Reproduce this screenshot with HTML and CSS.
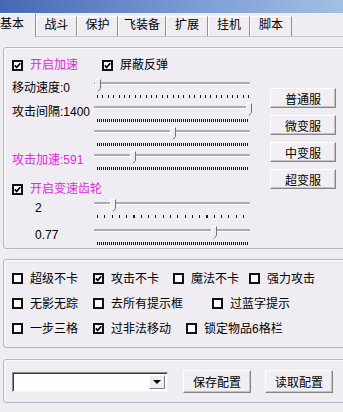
FILE: index.html
```html
<!DOCTYPE html>
<html lang="zh">
<head>
    <meta charset="UTF-8">
    <meta name="viewport" content="width=device-width, initial-scale=1.0">
    <link rel="stylesheet" href="styles.css">
</head>
<body>

	<div class="titlebar"></div>

	<!-- 탭 -->
	<ul class="tabs">
		<li class="tab on">基本</li>
		<li class="tab w41">战斗</li>
		<li class="tab w41">保护</li>
		<li class="tab w48">飞装备</li>
		<li class="tab w42">扩展</li>
		<li class="tab w43">挂机</li>
		<li class="tab w42">脚本</li>
	</ul>

	<!-- 가속 -->
	<div class="group group-speed">
		<div class="speed-left">
			<div class="check-row first">
				<label class="chk w90 pink"><span class="box"><svg viewBox="0 0 7 7"><path d="M0.8 3.4 L2.7 5.4 L6.3 1.2"/></svg></span>开启加速</label>
				<label class="chk"><span class="box"><svg viewBox="0 0 7 7"><path d="M0.8 3.4 L2.7 5.4 L6.3 1.2"/></svg></span>屏蔽反弹</label>
			</div>
			<div class="slide-row">
				<span class="slide-label">移动速度:0</span>
				<div class="slider sparse"><div class="track"></div><div class="ticks"></div><span class="thumb" style="left:1px"><svg viewBox="0 0 6 13"><polygon points="0.5,0.5 5.5,0.5 5.5,9.5 3,12.5 0.5,9.5" class="face"/><polyline points="0.5,9.5 0.5,0.5 5.5,0.5" class="hi"/><polyline points="5.5,0.5 5.5,9.5 3,12.5" class="lo"/></svg></span></div>
			</div>
			<div class="slide-row">
				<span class="slide-label">攻击间隔:1400</span>
				<div class="slider dense"><div class="track"></div><div class="ticks"></div><span class="thumb" style="left:152px"><svg viewBox="0 0 6 13"><polygon points="0.5,0.5 5.5,0.5 5.5,9.5 3,12.5 0.5,9.5" class="face"/><polyline points="0.5,9.5 0.5,0.5 5.5,0.5" class="hi"/><polyline points="5.5,0.5 5.5,9.5 3,12.5" class="lo"/></svg></span></div>
			</div>
			<div class="slide-row">
				<span class="slide-label"></span>
				<div class="slider dense"><div class="track"></div><div class="ticks"></div><span class="thumb" style="left:76px"><svg viewBox="0 0 6 13"><polygon points="0.5,0.5 5.5,0.5 5.5,9.5 3,12.5 0.5,9.5" class="face"/><polyline points="0.5,9.5 0.5,0.5 5.5,0.5" class="hi"/><polyline points="5.5,0.5 5.5,9.5 3,12.5" class="lo"/></svg></span></div>
			</div>
			<div class="slide-row">
				<span class="slide-label pink">攻击加速:591</span>
				<div class="slider dense"><div class="track"></div><div class="ticks"></div><span class="thumb" style="left:36px"><svg viewBox="0 0 6 13"><polygon points="0.5,0.5 5.5,0.5 5.5,9.5 3,12.5 0.5,9.5" class="face"/><polyline points="0.5,9.5 0.5,0.5 5.5,0.5" class="hi"/><polyline points="5.5,0.5 5.5,9.5 3,12.5" class="lo"/></svg></span></div>
			</div>

			<div class="check-row gear">
				<label class="chk pink"><span class="box"><svg viewBox="0 0 7 7"><path d="M0.8 3.4 L2.7 5.4 L6.3 1.2"/></svg></span>开启变速齿轮</label>
			</div>
			<div class="slide-row gear-row">
				<span class="slide-label indent">2</span>
				<div class="slider sparse wide"><div class="track"></div><div class="ticks"></div><span class="thumb" style="left:16px"><svg viewBox="0 0 6 13"><polygon points="0.5,0.5 5.5,0.5 5.5,9.5 3,12.5 0.5,9.5" class="face"/><polyline points="0.5,9.5 0.5,0.5 5.5,0.5" class="hi"/><polyline points="5.5,0.5 5.5,9.5 3,12.5" class="lo"/></svg></span></div>
			</div>
			<div class="slide-row gear-row last">
				<span class="slide-label indent">0.77</span>
				<div class="slider dense"><div class="track"></div><div class="ticks"></div><span class="thumb" style="left:117px"><svg viewBox="0 0 6 13"><polygon points="0.5,0.5 5.5,0.5 5.5,9.5 3,12.5 0.5,9.5" class="face"/><polyline points="0.5,9.5 0.5,0.5 5.5,0.5" class="hi"/><polyline points="5.5,0.5 5.5,9.5 3,12.5" class="lo"/></svg></span></div>
			</div>
		</div>

		<div class="speed-right">
			<button class="btn">普通服</button>
			<button class="btn">微变服</button>
			<button class="btn">中变服</button>
			<button class="btn">超变服</button>
		</div>
	</div>

	<!-- 옵션 -->
	<div class="group group-opts">
		<div class="opt-row">
			<label class="chk w81"><span class="box"></span>超级不卡</label>
			<label class="chk w80"><span class="box"><svg viewBox="0 0 7 7"><path d="M0.8 3.4 L2.7 5.4 L6.3 1.2"/></svg></span>攻击不卡</label>
			<label class="chk w76"><span class="box"></span>魔法不卡</label>
			<label class="chk"><span class="box"></span>强力攻击</label>
		</div>
		<div class="opt-row">
			<label class="chk w81"><span class="box"></span>无影无踪</label>
			<label class="chk w119"><span class="box"></span>去所有提示框</label>
			<label class="chk"><span class="box"></span>过蓝字提示</label>
		</div>
		<div class="opt-row">
			<label class="chk w81"><span class="box"></span>一步三格</label>
			<label class="chk w93"><span class="box"><svg viewBox="0 0 7 7"><path d="M0.8 3.4 L2.7 5.4 L6.3 1.2"/></svg></span>过非法移动</label>
			<label class="chk"><span class="box"></span>锁定物品6格栏</label>
		</div>
	</div>

	<!-- 설정 -->
	<div class="group group-conf">
		<div class="combo"><span class="drop"></span></div>
		<button class="btn conf-btn">保存配置</button>
		<button class="btn conf-btn">读取配置</button>
	</div>

</body>
</html>
```

FILE: styles.css
```css
/* 기본 */
* {box-sizing: border-box;}
body {margin: 0; width: 343px; height: 412px; overflow: hidden; background: #efedf2; color: #000; font: 12px "Liberation Sans", "Noto Sans CJK SC", sans-serif; }
.pink {color: #dc2adc; }

.titlebar {height: 13px; background: linear-gradient(to right, #4668b6, #7e9fd6 60%, #a3bfe4); }

/* 탭 */
.tabs {display: flex; align-items: flex-end; height: 24px; margin: 0; padding: 0; list-style: none; border-bottom: 1px solid #bfc6d3; }
.tabs .tab {height: 20px; line-height: 14px; padding-top: 1px; text-align: center; border-top: 1px solid #fff; border-left: 1px solid #fff; border-right: 1px solid #8f8f96; }
.tabs .tab.on {width: 36px; height: 24px; line-height: 20px; margin-bottom: -1px; padding-top: 0; text-align: left; border-left: 0; background: #efedf2; }
.tabs .w41 {width: 41px; }
.tabs .w42 {width: 42px; }
.tabs .w43 {width: 42px; }
.tabs .w48 {width: 48px; }

/* 그룹 박스 */
.group {margin: 0 -10px 0 3px; border: 1px solid #a9b8cd; border-radius: 3px; box-shadow: inset 1px 1px 0 #fbfbfd; }
.group-speed {display: flex; height: 202px; margin-top: 10px; }
.group-opts {height: 89px; margin-top: 10px; padding-top: 6px; }
.group-conf {display: flex; align-items: center; height: 44px; margin-top: 11px; padding: 10px 0 0 8px; align-items: flex-start; }

/* 체크박스 */
.chk {display: flex; align-items: center; gap: 7px; height: 12px; line-height: 12px; white-space: nowrap; }
.chk .box {flex: none; width: 11px; height: 11px; border: 2px solid #111; background: #fff; display: flex; }
.chk .box svg {width: 7px; height: 7px; }
.chk .box path {fill: none; stroke: #000; stroke-width: 1.7; }
.w76 {width: 76px; }
.w80 {width: 80px; }
.w81 {width: 81px; }
.w90 {width: 90px; }
.w93 {width: 93px; }
.w119 {width: 119px; }

/* 가속 왼쪽 */
.speed-left {width: 249px; padding: 11px 0 0 8px; }
.check-row {display: flex; }
.check-row.first {margin-bottom: 8px; }
.check-row.gear {margin: 8px 0 4px; }

.slide-row {display: flex; height: 24px; }
.slide-row.gear-row + .gear-row {margin-top: 3px; }
.slide-label {width: 82px; height: 18px; line-height: 18px; white-space: nowrap; }
.slide-label.indent {padding-left: 23px; }

/* 슬라이더 */
.slider {position: relative; width: 159px; height: 24px; }
.slider .track {width: 156px; height: 3px; margin-top: 3px; background: #a5adba; border-bottom: 1px solid #fff; }
.slider .ticks {width: 152px; height: 3px; margin: 10px 0 0 3px; }
.slider.sparse .ticks {background: repeating-linear-gradient(to right, #1a1a1a 0 1px, transparent 1px 5.4px); }
.slider.sparse.wide .ticks {background: repeating-linear-gradient(to right, #1a1a1a 0 1px, transparent 1px 7.3px); }
.slider.dense .ticks {background: repeating-linear-gradient(to right, #1a1a1a 0 1px, transparent 1px 2px); }
.slider .thumb {position: absolute; top: 0; width: 6px; height: 13px; }
.slider .thumb svg {display: block; width: 6px; height: 13px; }
.slider .thumb .face {fill: #efedf2; stroke: none; }
.slider .thumb .hi {fill: none; stroke: #fff; stroke-width: 1; }
.slider .thumb .lo {fill: none; stroke: #6f6f78; stroke-width: 1; }

/* 버튼 */
.speed-right {display: flex; flex-direction: column; gap: 7px; padding: 40px 0 0 17px; }
.btn {width: 66px; height: 20px; padding: 0; background: #f1eff3; color: #000; font: 12px "Liberation Sans", "Noto Sans CJK SC", sans-serif; border: 1px solid; border-color: #fff #858589 #858589 #fff; box-shadow: inset -1px -1px 0 #c2c2c8; }

/* 옵션 */
.opt-row {display: flex; align-items: center; height: 25px; padding-left: 8px; }

/* 설정 */
.combo {display: flex; justify-content: flex-end; width: 156px; height: 20px; margin-top: 2px; padding: 2px; background: #fff; border: 1px solid; border-color: #8a8a90 #f4f4f6 #f4f4f6 #8a8a90; box-shadow: inset 1px 1px 0 #3a3a3a; }
.combo .drop {position: relative; width: 16px; height: 14px; background: #efedf2; border: 1px solid; border-color: #fff #808086 #808086 #fff; }
.combo .drop::after {content: ""; position: absolute; left: 3px; top: 4px; border: 4px solid transparent; border-top: 4px solid #000; border-bottom: 0; }
.conf-btn {width: 68px; height: 23px; margin-left: 15px; }
.conf-btn + .conf-btn {margin-left: 14px; }
```
